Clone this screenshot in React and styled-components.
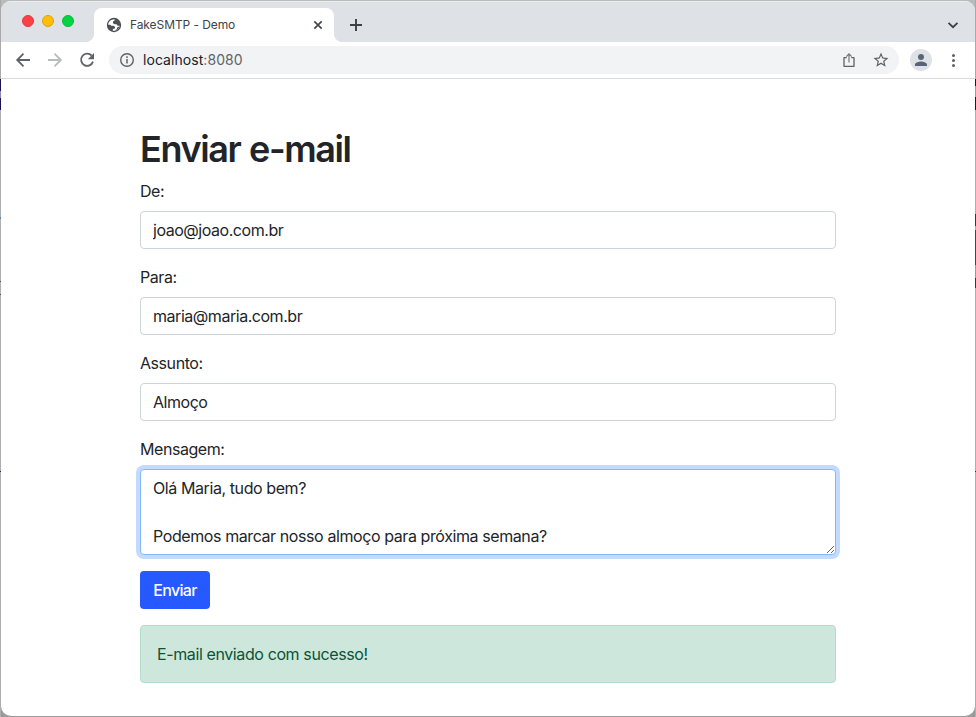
import React from 'react';
import styled, { createGlobalStyle } from 'styled-components';

const Global = createGlobalStyle`
  * { box-sizing: border-box; }
  html, body { margin: 0; height: 717px; overflow: hidden; background: #b5b6b9; }
  body, input, textarea, button { font-family: Inter, "Liberation Sans", sans-serif; }
`;

const Desktop = styled.div`
  width: 976px;
  height: 717px;
  padding: 1px;
  background:
    linear-gradient(#a9a9ab 79px, #1c1450 79px, #1c1450 91px, #8c88a4 91px, #8c88a4 98px, #1c1450 98px, #1c1450 110px, #adadaf 110px, #adadaf 217px, #5a86c8 217px, #5a86c8 219px, #adadaf 219px, #adadaf 281px, #555 281px, #555 282px, #adadaf 282px, #adadaf 294px, #555 294px, #555 295px, #adadaf 295px, #adadaf 471px, #2a2450 471px, #2a2450 472px, #adadaf 472px) left / 1px 100% no-repeat,
    linear-gradient(#a9a9ab 79px, #1c1840 79px, #1c1840 86px, #9a9aa8 86px, #9a9aa8 97px, #1c1840 97px, #1c1840 110px, #adadaf 110px, #adadaf 214px, #8c1020 214px, #8c1020 226px, #b8a0a0 226px, #b8a0a0 230px, #962812 230px, #962812 265px, #b09098 265px, #b09098 278px, #8c1020 278px, #8c1020 288px, #adadaf 288px, #adadaf 471px, #333 471px, #333 472px, #adadaf 472px) right / 1px 100% no-repeat,
    linear-gradient(#b9babc 50%, #9b9b9b 50%);
`;

const Window = styled.div`
  height: 715px;
  border-radius: 10px;
  overflow: hidden;
  background: #fff;
  display: flex;
  flex-direction: column;
`;

const TabStrip = styled.div`
  height: 41px;
  flex: none;
  background: #dee1e6;
  display: flex;
  align-items: flex-end;
  box-shadow: inset 0 1px #eceef0;
`;

const Lights = styled.div`
  display: flex;
  gap: 8px;
  padding-left: 21px;
  width: 93px;
  align-self: flex-start;
  margin-top: 14px;
`;

const Light = styled.span`
  width: 12px;
  height: 12px;
  border-radius: 50%;
  background: ${(p) => p.$fill};
  border: 1px solid ${(p) => p.$edge};
`;

const Tab = styled.div`
  width: 240px;
  height: 34px;
  background: #fff;
  border-radius: 8px 8px 0 0;
  display: flex;
  align-items: center;
  padding: 0 9px 0 12px;
  position: relative;
  &::before, &::after {
    content: "";
    position: absolute;
    bottom: 0;
    width: 8px;
    height: 8px;
  }
  &::before { left: -8px; background: radial-gradient(circle at 0 0, transparent 7.6px, #fff 8.2px); }
  &::after { right: -8px; background: radial-gradient(circle at 100% 0, transparent 7.6px, #fff 8.2px); }
`;

const TabTitle = styled.span`
  flex: 1;
  margin-left: 8px;
  font-size: 12px;
  line-height: 16px;
  letter-spacing: -0.08px;
  color: #3f4347;
`;

const NewTab = styled.div`
  margin: 0 auto 10px 15px;
  display: flex;
`;

const TabMenu = styled.div`
  display: flex;
  margin: 0 15px 10px 0;
`;

const Toolbar = styled.div`
  height: 37px;
  flex: none;
  display: flex;
  align-items: center;
  border-bottom: 1px solid #d9dadc;
  padding: 0 14px 0 14px;
`;

const NavIcons = styled.div`
  display: flex;
  gap: 16px;
  width: 94px;
`;

const AddressBar = styled.div`
  width: 790px;
  height: 28px;
  border-radius: 14px;
  background: #f1f3f4;
  display: flex;
  align-items: center;
  padding: 0 9px 0 10px;
`;

const Url = styled.span`
  flex: 1;
  margin-left: 8px;
  padding-bottom: 1px;
  font-size: 14px;
  letter-spacing: 0.06px;
  color: #202124;
  span { color: #5f6368; }
`;

const AddressIcons = styled.div`
  display: flex;
  align-items: center;
  gap: 15px;
`;

const Avatar = styled.div`
  width: 22px;
  height: 22px;
  border-radius: 50%;
  background: #dee1e6;
  margin: 0 auto 0 11px;
  display: flex;
  align-items: center;
  justify-content: center;
`;

const Page = styled.main`
  width: 696px;
  margin: 48px 0 0 139px;
  color: #212529;
  font-size: 16px;
  line-height: 24px;
  display: flex;
  flex-direction: column;
`;

const Title = styled.h1`
  margin: 0 0 8px;
  font-size: 36px;
  line-height: 44px;
  font-weight: 600;
  letter-spacing: -1.4px;
  word-spacing: 1px;
`;

const Field = styled.div`
  display: flex;
  flex-direction: column;
  margin-bottom: 16px;
`;

const Label = styled.label`
  margin-bottom: 8px;
  font-size: 16px;
  letter-spacing: -0.44px;
`;

const Input = styled.input`
  height: 38px;
  border: 1px solid #ced4da;
  border-radius: 4px;
  padding: 6px 12px;
  font-size: 16px;
  line-height: 24px;
  letter-spacing: -0.46px;
  color: #212529;
  outline: 0;
`;

const Message = styled.textarea`
  height: 86px;
  border: 1px solid #86b7fe;
  border-radius: 4px;
  padding: 6px 12px;
  font-size: 16px;
  line-height: 24px;
  letter-spacing: -0.41px;
  color: #212529;
  outline: 0;
  box-shadow: 0 0 0 4px #c2dbfe;
  resize: vertical;
`;

const Submit = styled.button`
  align-self: flex-start;
  width: 70px;
  height: 38px;
  padding: 0;
  border: 0;
  border-radius: 4px;
  background: #2659ff;
  color: #fff;
  font-size: 16px;
  font-weight: 500;
  line-height: 24px;
  letter-spacing: -0.65px;
`;

const Alert = styled.div`
  margin-top: 16px;
  height: 58px;
  border: 1px solid #b5dccb;
  border-radius: 4px;
  background: #cde7dc;
  color: #0a5436;
  padding: 16px;
  letter-spacing: -0.39px;
`;

const Glyph = styled.svg`
  display: block;
  flex: none;
`;

function Icon({ size = 16, box = 24, color = '#5f6368', d, children }) {
  return (
    <Glyph width={size} height={size} viewBox={`0 0 ${box} ${box}`} fill={color}>
      {d ? <path d={d} /> : children}
    </Glyph>
  );
}

export default function App() {
  return (
    <>
      <Global />
      <Desktop>
        <Window>
          <TabStrip>
            <Lights>
              <Light $fill="#ff4147" $edge="#e5383e" />
              <Light $fill="#ffbd0a" $edge="#e0a20d" />
              <Light $fill="#00d443" $edge="#0bb83c" />
            </Lights>
            <Tab>
              <Icon box={16} color="#4d5156">
                <circle cx="8" cy="8" r="7.2" />
                <path fill="#fff" d="M8.6 2.2 V3.5 L7 4.6 V6.2 L8.6 7.2 H10.6 L11.6 8.8 H13.8 C13.5 11.4 11.4 13.5 8.8 13.8 H6.8 V12.3 L9 11.2 V9.8 L7.4 8.8 H5.2 L4.2 7.8 H2.2 C2.3 4.9 4.6 2.3 8.6 2.2 Z" />
                <path fill="#4d5156" d="M11.4 10.2 L14 9.2 L11 13.3 L9.2 13.8 L10.8 12 Z" />
              </Icon>
              <TabTitle>FakeSMTP - Demo</TabTitle>
              <Icon size={14} box={14} color="none">
                <path d="M3.3 3.3l7.4 7.4M10.7 3.3l-7.4 7.4" stroke="#45494d" strokeWidth="1.7" />
              </Icon>
            </Tab>
            <NewTab>
              <Icon size={14} box={14} color="none">
                <path d="M7 1v12M1 7h12" stroke="#3c4043" strokeWidth="1.9" />
              </Icon>
            </NewTab>
            <TabMenu>
              <Icon size={14} box={14} color="none">
                <path d="M2.5 4.8l4.5 4.4 4.5-4.4" stroke="#3c4043" strokeWidth="1.8" />
              </Icon>
            </TabMenu>
          </TabStrip>
          <Toolbar>
            <NavIcons>
              <Icon box={16} color="none">
                <path d="M15 8H2.4M8.5 1.7L2.2 8l6.3 6.3" stroke="#5f6368" strokeWidth="1.8" />
              </Icon>
              <Icon box={16} color="none">
                <path d="M1 8h12.6M7.5 1.7L13.8 8l-6.3 6.3" stroke="#b9bbbd" strokeWidth="1.8" />
              </Icon>
              <Icon box={16} color="none">
                <path d="M12.7 3.6A6.1 6.1 0 1 0 14 9.6" stroke="#5f6368" strokeWidth="1.8" />
                <path d="M15 1v6.2H8.8z" fill="#5f6368" />
              </Icon>
            </NavIcons>
            <AddressBar>
              <Icon box={16} color="none">
                <circle cx="8" cy="8" r="6.3" stroke="#5f6368" strokeWidth="1.4" />
                <path d="M8 7v4.5M8 4.3v1.6" stroke="#5f6368" strokeWidth="1.5" />
              </Icon>
              <Url>localhost<span>:8080</span></Url>
              <AddressIcons>
                <Icon box={16} color="none">
                  <path d="M5.7 5.7H3v8.6h10V5.7h-2.7" stroke="#5f6368" strokeWidth="1.3" strokeLinejoin="round" />
                  <path d="M8 10.5V2M5.3 4.6L8 1.9l2.7 2.7" stroke="#74787c" strokeWidth="1.2" />
                </Icon>
                <Icon size={18} d="M22 9.24l-7.19-.62L12 2 9.19 8.63 2 9.24l5.46 4.73L5.82 21 12 17.27 18.18 21l-1.63-7.03L22 9.24zM12 15.4l-3.76 2.27 1-4.28-3.32-2.88 4.38-.38L12 6.1l1.71 4.04 4.38.38-3.32 2.88 1 4.28L12 15.4z" />
              </AddressIcons>
            </AddressBar>
            <Avatar>
              <Icon size={18} color="#5a6478" d="M12 12a4 4 0 1 0 0-8 4 4 0 0 0 0 8zm0 2c-2.67 0-8 1.34-8 4v2h16v-2c0-2.66-5.33-4-8-4z" />
            </Avatar>
            <Icon box={16} color="#5f6368">
              <circle cx="8.5" cy="3.4" r="1.5" />
              <circle cx="8.5" cy="8.4" r="1.5" />
              <circle cx="8.5" cy="13.4" r="1.5" />
            </Icon>
          </Toolbar>
          <Page>
            <Title>Enviar e-mail</Title>
            <Field>
              <Label>De:</Label>
              <Input defaultValue="joao@joao.com.br" />
            </Field>
            <Field>
              <Label>Para:</Label>
              <Input defaultValue="maria@maria.com.br" />
            </Field>
            <Field>
              <Label>Assunto:</Label>
              <Input defaultValue="Almoço" />
            </Field>
            <Field>
              <Label>Mensagem:</Label>
              <Message defaultValue={'Olá Maria, tudo bem?\n\nPodemos marcar nosso almoço para próxima semana?'} />
            </Field>
            <Submit>Enviar</Submit>
            <Alert>E-mail enviado com sucesso!</Alert>
          </Page>
        </Window>
      </Desktop>
    </>
  );
}
